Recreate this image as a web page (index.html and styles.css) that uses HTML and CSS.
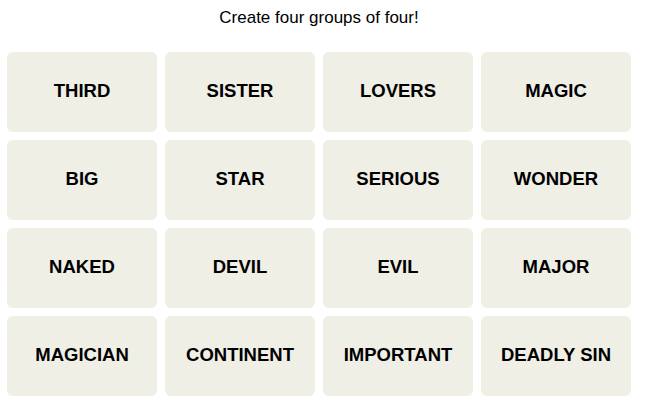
FILE: index.html
```html
<!DOCTYPE html>
<html lang="en">
<head>
    <meta charset="UTF-8">
    <meta name="viewport" content="width=device-width, initial-scale=1.0">
    <title>Connections</title>
    <link rel="stylesheet" href="styles.css">
</head>
<body>
    <div class="board">
        <p class="prompt">Create four groups of four!</p>
        <div class="grid">
            <button class="tile">THIRD</button>
            <button class="tile">SISTER</button>
            <button class="tile">LOVERS</button>
            <button class="tile">MAGIC</button>

            <button class="tile">BIG</button>
            <button class="tile">STAR</button>
            <button class="tile">SERIOUS</button>
            <button class="tile">WONDER</button>

            <button class="tile">NAKED</button>
            <button class="tile">DEVIL</button>
            <button class="tile">EVIL</button>
            <button class="tile">MAJOR</button>

            <button class="tile">MAGICIAN</button>
            <button class="tile">CONTINENT</button>
            <button class="tile">IMPORTANT</button>
            <button class="tile">DEADLY SIN</button>
        </div>
    </div>
</body>
</html>
```

FILE: styles.css
```css
body {
    margin: 0;
    background-color: #fff;
    font-family: "Liberation Sans", Arial, sans-serif;
    color: #121212;
}
.board {
    width: 624px;
    margin-left: 7px;
    padding-top: 8px;
}
.prompt {
    margin: 0 0 24px;
    font-size: 17px;
    line-height: 20px;
    text-align: center;
    color: #000;
}
.grid {
    display: grid;
    grid-template-columns: repeat(4, 150px);
    grid-auto-rows: 80px;
    gap: 8px;
}
.tile {
    border: none;
    border-radius: 6px;
    background-color: #efefe6;
    color: #000;
    font-family: "Liberation Sans", Arial, sans-serif;
    font-size: 18.5px;
    font-weight: bold;
    padding: 0 0 2px;
    cursor: pointer;
}
```
